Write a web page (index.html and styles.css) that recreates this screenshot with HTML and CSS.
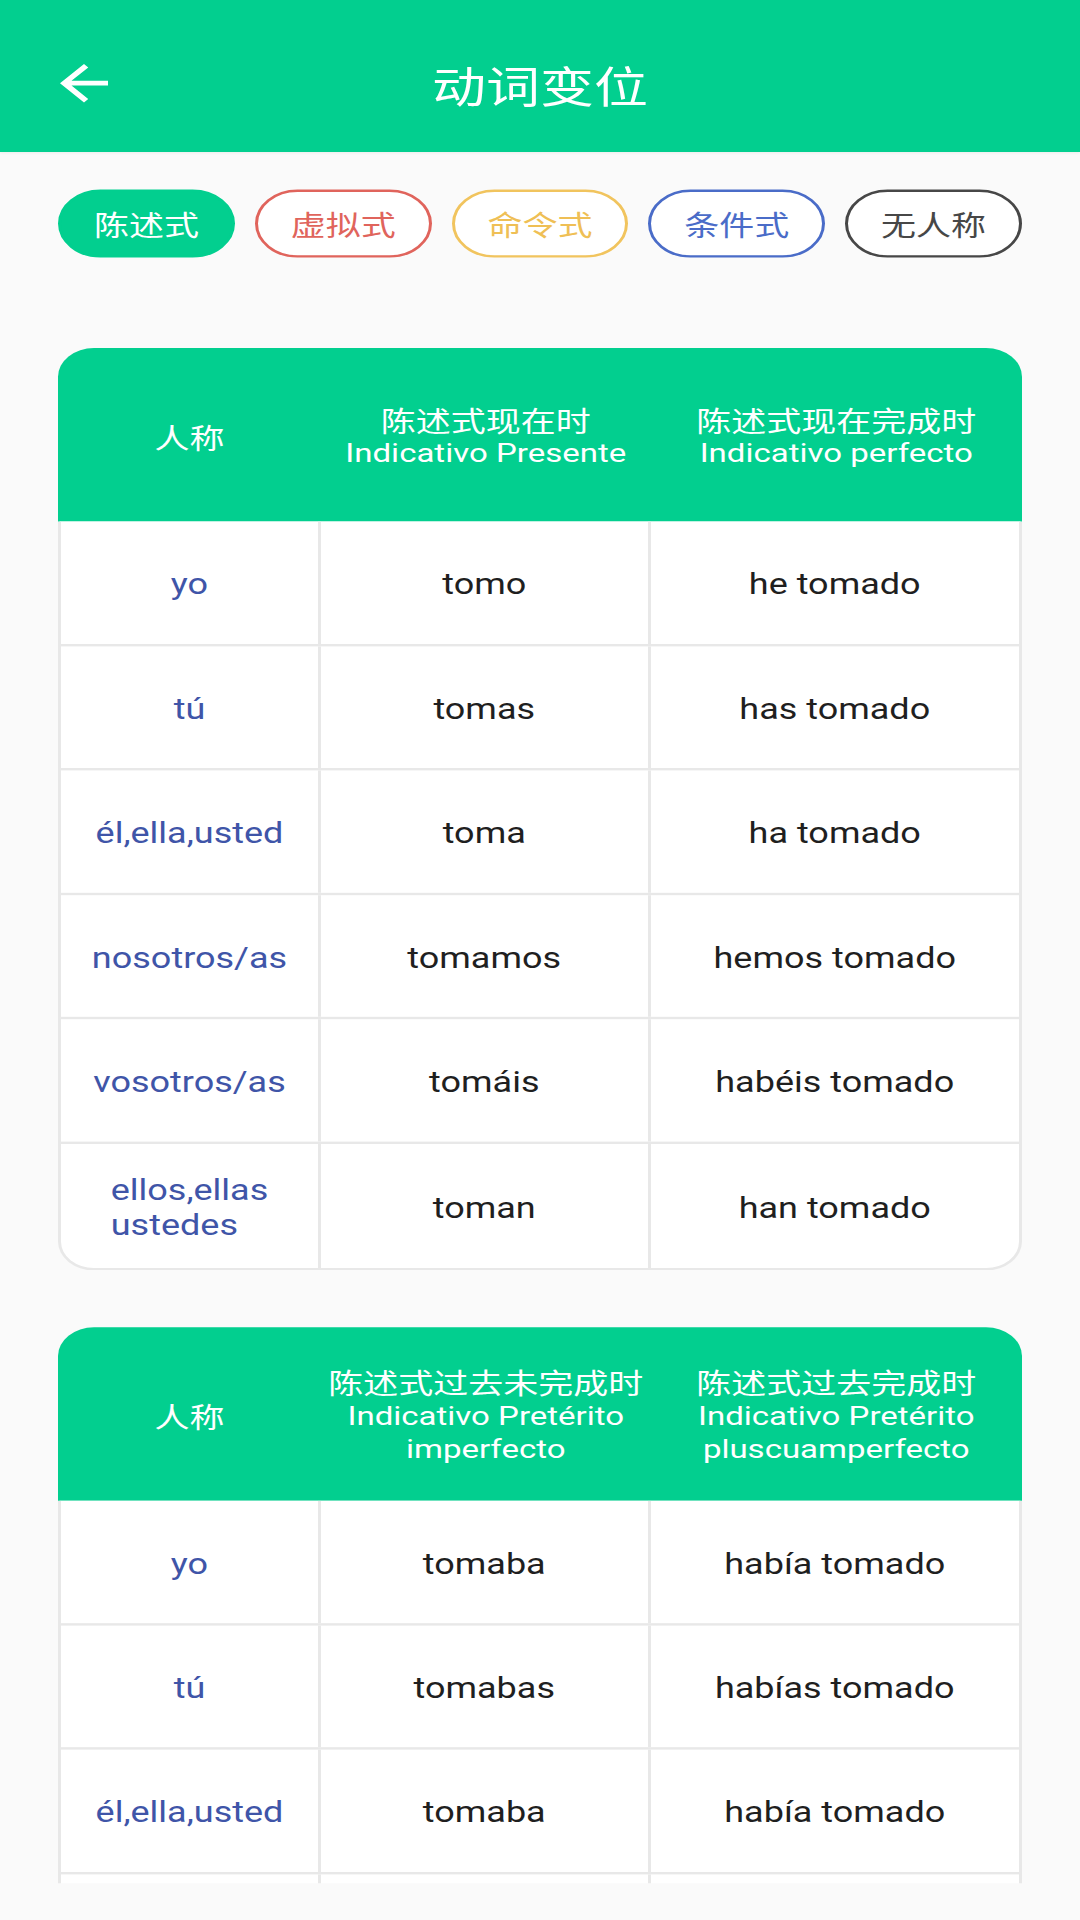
FILE: index.html
```html
<!DOCTYPE html>
<html lang="zh-CN">
<head>
<meta charset="utf-8">
<title>动词变位</title>
<link rel="stylesheet" href="styles.css">
</head>
<body>
<div class="screen">
  <header class="appbar">
    <div class="appbar-left">
      <svg class="back" viewBox="0 0 24 24" width="72" height="72" aria-hidden="true">
        <path d="M20 11H7.83l5.59-5.59L12 4l-8 8 8 8 1.41-1.41L7.83 13H20v-2z" fill="#ffffff"/>
      </svg>
    </div>
    <h1 class="title">动词变位</h1>
    <div class="appbar-right"></div>
  </header>

  <main class="content">
    <nav class="chips">
      <span class="chip chip-green">陈述式</span>
      <span class="chip chip-red">虚拟式</span>
      <span class="chip chip-yellow">命令式</span>
      <span class="chip chip-blue">条件式</span>
      <span class="chip chip-gray">无人称</span>
    </nav>

    <section class="table">
      <div class="thead">
        <div class="th"><span class="zh">人称</span></div>
        <div class="th"><span class="zh">陈述式现在时</span><span class="es">Indicativo Presente</span></div>
        <div class="th"><span class="zh">陈述式现在完成时</span><span class="es">Indicativo perfecto</span></div>
      </div>
      <div class="tbody">
        <div class="tr"><div class="td person">yo</div><div class="td">tomo</div><div class="td">he tomado</div></div>
        <div class="tr"><div class="td person">tú</div><div class="td">tomas</div><div class="td">has tomado</div></div>
        <div class="tr"><div class="td person">él,ella,usted</div><div class="td">toma</div><div class="td">ha tomado</div></div>
        <div class="tr"><div class="td person">nosotros/as</div><div class="td">tomamos</div><div class="td">hemos tomado</div></div>
        <div class="tr"><div class="td person">vosotros/as</div><div class="td">tomáis</div><div class="td">habéis tomado</div></div>
        <div class="tr"><div class="td person"><span class="multi">ellos,ellas<br>ustedes</span></div><div class="td">toman</div><div class="td">han tomado</div></div>
      </div>
    </section>

    <section class="table">
      <div class="thead">
        <div class="th"><span class="zh">人称</span></div>
        <div class="th"><span class="zh">陈述式过去未完成时</span><span class="es">Indicativo Pretérito</span><span class="es">imperfecto</span></div>
        <div class="th"><span class="zh">陈述式过去完成时</span><span class="es">Indicativo Pretérito</span><span class="es">pluscuamperfecto</span></div>
      </div>
      <div class="tbody">
        <div class="tr"><div class="td person">yo</div><div class="td">tomaba</div><div class="td">había tomado</div></div>
        <div class="tr"><div class="td person">tú</div><div class="td">tomabas</div><div class="td">habías tomado</div></div>
        <div class="tr"><div class="td person">él,ella,usted</div><div class="td">tomaba</div><div class="td">había tomado</div></div>
        <div class="tr"><div class="td person">nosotros/as</div><div class="td">tomábamos</div><div class="td">habíamos tomado</div></div>
        <div class="tr"><div class="td person">vosotros/as</div><div class="td">tomabais</div><div class="td">habíais tomado</div></div>
        <div class="tr"><div class="td person"><span class="multi">ellos,ellas<br>ustedes</span></div><div class="td">tomaban</div><div class="td">habían tomado</div></div>
      </div>
    </section>
  </main>
</div>
</body>
</html>
```

FILE: styles.css
```css
html, body {
  margin: 0;
  padding: 0;
}

body {
  width: 1080px;
  height: 1920px;
  overflow: hidden;
  background: #fafafa;
  font-family: Roboto, "Noto Sans CJK SC", "Noto Sans", sans-serif;
}

/* The layout is drawn on a 1080x2400 phone canvas and shown at 1080x1920 */
.screen {
  width: 1080px;
  height: 2400px;
  transform: scaleY(0.8);
  transform-origin: 0 0;
  display: flex;
  flex-direction: column;
  background: #fafafa;
}

.appbar {
  flex: 0 0 190px;
  box-sizing: border-box;
  padding-top: 12px;
  background: #02cf8f;
  display: grid;
  grid-template-columns: 1fr auto 1fr;
  align-items: center;
  box-shadow: 0 2px 3px rgba(0, 0, 0, 0.06);
}

.appbar-left {
  padding-left: 48px;
  display: flex;
  align-items: center;
  margin-top: 5px;
}

.back {
  display: block;
}

.title {
  margin: 0;
  padding-top: 9px;
  font-family: "Noto Sans CJK SC", sans-serif;
  font-weight: 400;
  font-size: 54px;
  line-height: 70px;
  color: #ffffff;
}

.content {
  height: 2164px;
  overflow: hidden;
  box-sizing: border-box;
  padding: 47px 58px 0;
}

.chips {
  display: flex;
  gap: 20px;
  height: 85px;
}

.chip {
  flex: 1 1 0;
  box-sizing: border-box;
  border: 3px solid;
  border-radius: 43px;
  display: flex;
  align-items: center;
  justify-content: center;
  font-family: "Noto Sans CJK SC", sans-serif;
  font-size: 35px;
  background: #ffffff;
}

.chip-green {
  background: #02cf8f;
  border-color: #02cf8f;
  color: #ffffff;
}

.chip-red {
  border-color: #e0645c;
  color: #e0645c;
}

.chip-yellow {
  border-color: #f1c45e;
  color: #efbf55;
}

.chip-blue {
  border-color: #4a6cc8;
  color: #4a6cc8;
}

.chip-gray {
  border-color: #474747;
  color: #474747;
}

.table {
  margin-top: 113px;
}

.table + .table {
  margin-top: 71px;
}

.thead {
  display: grid;
  grid-template-columns: 263px 329.5px 1fr;
  height: 217px;
  background: #02cf8f;
  border-radius: 36px 36px 0 0;
  color: #ffffff;
}

.th {
  display: flex;
  flex-direction: column;
  align-items: center;
  justify-content: center;
  text-align: center;
  white-space: nowrap;
  padding-top: 4px;
}

.zh {
  font-family: "Noto Sans CJK SC", sans-serif;
  font-size: 35px;
  line-height: 43px;
}

.es {
  font-family: Roboto, sans-serif;
  font-size: 33px;
  line-height: 42px;
}

.tbody {
  background: #ffffff;
  border: 3px solid #e8e8e8;
  border-top: 0;
  border-radius: 0 0 36px 36px;
  overflow: hidden;
}

.tr {
  display: grid;
  grid-template-columns: 260px 329.5px 1fr;
  height: 155.5px;
  border-bottom: 3px solid #e8e8e8;
  box-sizing: border-box;
}

.tr:last-child {
  border-bottom: 0;
}

.td {
  display: flex;
  align-items: center;
  justify-content: center;
  box-sizing: border-box;
  padding-top: 6px;
  font-family: Roboto, sans-serif;
  font-size: 36px;
  color: #1f1f1f;
  border-right: 3px solid #e8e8e8;
}

.td:last-child {
  border-right: 0;
}

.person {
  color: #3f55a8;
}

.multi {
  display: block;
  text-align: left;
  line-height: 44px;
}
```
